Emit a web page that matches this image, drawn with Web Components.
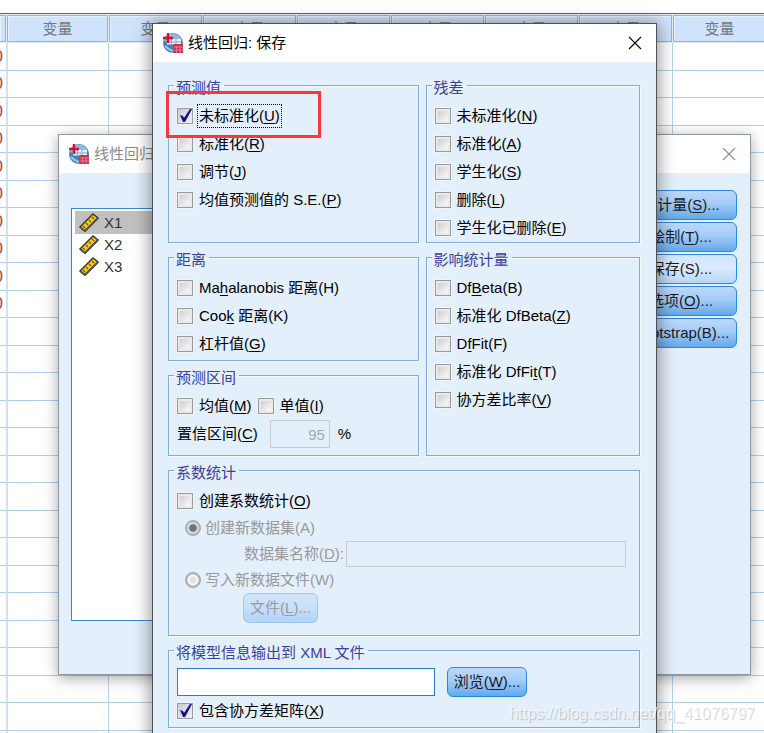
<!DOCTYPE html>
<html lang="zh-CN">
<head>
<meta charset="utf-8">
<title>线性回归: 保存</title>
<style>
  body{margin:0;height:100vh;overflow:hidden;position:relative;background:#fff;color:#000;font:15px/20px "Liberation Sans","Noto Sans CJK SC",sans-serif}
  u{text-underline-offset:2px}
  app-window{position:absolute}
  .back{top:134px;left:58px;right:13px}
  .front{top:23px;left:152px;right:107px;min-height:100vh}
  .regression{display:flex;justify-content:space-between;align-items:flex-start;padding:17px 13px 53px 12px}
  .regression variable-list{flex:0 1 300px;margin-top:18px}
  .buttons{display:flex;flex-direction:column;gap:2px;width:112px}
  .save{display:flex;flex-direction:column;gap:2px;padding:11px 16px 20px 15px}
  .pair{display:grid;grid-template-columns:250fr 214fr;gap:2px 7px}
  .stack{display:flex;flex-direction:column;gap:2px}
  .stack group-box:last-child{flex:1}
  .roomy{--pad-bottom:2px}
  .interval{--pad-bottom:7px}
  .coef{--pad-bottom:12px}
  .row{display:flex;align-items:center;gap:6px}
  .xml{gap:12px}
  .xml text-field{flex:0 1 258px}
  .xml push-button{width:80px}
  .nested{padding-left:8px}
  .name{padding:0 1px 0 67px}
  .file{width:75px;padding-left:66px}
  .watermark{position:absolute;right:9px;bottom:9px;font-size:16px;color:rgb(255 255 255 / .7);text-shadow:1px 1px 1px rgb(0 0 0 / .2)}
</style>
</head>
<body>
  <data-grid columns="8" rows="26" filled="10"></data-grid>

  <app-window class="back" heading="线性回归" inactive>
    <div class="regression">
      <variable-list items="X1,X2,X3" selected="X1"></variable-list>
      <div class="buttons">
        <push-button>统计量(<u>S</u>)...</push-button>
        <push-button>绘制(<u>T</u>)...</push-button>
        <push-button tone="light">保存(S)...</push-button>
        <push-button>选项(<u>O</u>)...</push-button>
        <push-button>Bootstrap(B)...</push-button>
      </div>
    </div>
  </app-window>

  <app-window class="front" heading="线性回归: 保存">
    <div class="save">
      <div class="pair">
        <group-box heading="预测值">
          <check-item checked focused marked>未标准化(<u>U</u>)</check-item>
          <check-item>标准化(<u>R</u>)</check-item>
          <check-item>调节(<u>J</u>)</check-item>
          <check-item>均值预测值的 S.E.(<u>P</u>)</check-item>
        </group-box>
        <group-box heading="残差">
          <check-item>未标准化(<u>N</u>)</check-item>
          <check-item>标准化(<u>A</u>)</check-item>
          <check-item>学生化(<u>S</u>)</check-item>
          <check-item>删除(<u>L</u>)</check-item>
          <check-item>学生化已删除(<u>E</u>)</check-item>
        </group-box>
        <div class="stack">
          <group-box class="roomy" heading="距离">
            <check-item>Ma<u>h</u>alanobis 距离(H)</check-item>
            <check-item>Coo<u>k</u> 距离(K)</check-item>
            <check-item>杠杆值(<u>G</u>)</check-item>
          </group-box>
          <group-box class="interval" heading="预测区间">
            <div class="row">
              <check-item>均值(<u>M</u>)</check-item>
              <check-item>单值(<u>I</u>)</check-item>
            </div>
            <text-field value="95" unit="%" disabled numeric>置信区间(<u>C</u>)</text-field>
          </group-box>
        </div>
        <group-box heading="影响统计量">
          <check-item>Df<u>B</u>eta(B)</check-item>
          <check-item>标准化 DfBeta(<u>Z</u>)</check-item>
          <check-item>D<u>f</u>Fit(F)</check-item>
          <check-item>标准化 DfFi<u>t</u>(T)</check-item>
          <check-item>协方差比率(<u>V</u>)</check-item>
        </group-box>
      </div>
      <group-box class="coef" heading="系数统计">
        <check-item>创建系数统计(<u>O</u>)</check-item>
        <radio-item class="nested" checked>创建新数据集(A)</radio-item>
        <text-field class="name" disabled>数据集名称(<u>D</u>):</text-field>
        <radio-item class="nested">写入新数据文件(W)</radio-item>
        <push-button class="file" disabled>文件(<u>L</u>)...</push-button>
      </group-box>
      <group-box class="roomy" heading="将模型信息输出到 XML 文件">
        <div class="row xml">
          <text-field label="XML 文件"></text-field>
          <push-button>浏览(<u>W</u>)...</push-button>
        </div>
        <check-item checked>包含协方差矩阵(<u>X</u>)</check-item>
      </group-box>
    </div>
  </app-window>

  <div class="watermark">https://blog.csdn.net/qq_41076797</div>

<script>
// Small base: attach an open shadow root and fill it from template()
class UiElement extends HTMLElement{
  constructor(){
    super();
    this.attachShadow({mode:'open'});
  }
  connectedCallback(){ this.shadowRoot.innerHTML = this.template(); }
  flag(name){ return this.hasAttribute(name) ? name : ''; }
  attr(name){ return this.getAttribute(name) || ''; }
}

// <data-grid> — the sheet behind the dialogs
class DataGrid extends UiElement{
  template(){
    const n=Number(this.attr('columns')), rows=Number(this.attr('rows')), filled=Number(this.attr('filled'));
    const head='<th><div></div></th>'+'<th><div>变量</div></th>'.repeat(n);
    let body='';
    for(let i=0;i<rows;i++){
      body+=`<tr><td><span>${i<filled?'0':''}</span></td>${'<td></td>'.repeat(n)}</tr>`;
    }
    return `
      <style>
        :host{display:block;height:100vh;box-sizing:border-box;padding-top:13px;overflow:hidden}
        table{border-collapse:separate;border-spacing:0;table-layout:fixed;width:max-content;border-top:1px solid #1878cc}
        col{width:94px}
        col:first-child{width:6px}
        col:nth-child(2){width:102px}
        th{height:29px;padding:1px 0;font-weight:400;color:#707780;box-sizing:border-box;background:#e3edf8}
        th div{height:27px;line-height:25px;box-sizing:border-box;border:1px solid #9db1ca;margin-left:1px;background:#cfe3fc;box-shadow:inset 1px 1px #e6f1fe}
        th:first-child div{margin-left:0;border-left:0}
        td{height:28px;padding:0;box-sizing:border-box;border-bottom:1px solid #b0cfea;border-left:1px solid #b7d3ec}
        tr:nth-child(even) td{height:27px}
        td:nth-child(2){border-left:2px solid #cfe1f3}
        td:first-child{border-left:0}
        span{display:flex;justify-content:flex-end;width:3px;overflow:hidden;font-size:17px;color:#a8474f}
      </style>
      <table>
        <colgroup>${'<col>'.repeat(n+1)}</colgroup>
        <thead><tr>${head}</tr></thead>
        <tbody>${body}</tbody>
      </table>`;
  }
}
customElements.define('data-grid', DataGrid);

// <app-window> — title bar with logo and close button, content in the slot
class AppWindow extends UiElement{
  template(){
    return `
      <style>
        :host{display:block;box-sizing:border-box;border:1px solid #4c4f54;background:#e3effb;box-shadow:0 2px 16px 2px rgb(0 0 0 / .4)}
        :host([inactive]){border-color:#8d97a3;box-shadow:0 3px 14px rgb(0 0 0 / .35)}
        header{display:flex;align-items:center;gap:5px;height:38px;padding:0 8px 0 10px;background:#fff}
        h2{flex:1;margin:0;font-size:15px;font-weight:400}
        :host([inactive]) :is(h2,button){color:#8c8c8c}
        button{display:flex;padding:6px;border:0;background:none;color:#000}
      </style>
      <header>
        <svg width="20" height="20" viewBox="0 0 20 20" aria-hidden="true">
          <circle cx="10" cy="10" r="10" fill="#4580b5"/>
          <path d="M4 2.500A9.600 9.600 0 0 1 18.500 6L17 11H5L1 7z" fill="#8fb9db"/>
          <path d="M4 6h14v5.500H4z" fill="#e8f2fa"/>
          <path d="M4 9h14M8.500 6v6M13 6v6" stroke="#7ba8cf"/>
          <path d="M2 13q4 4 8 5" stroke="#9cc5e4" stroke-width="2" fill="none"/>
          <path d="M5 0v10M0 5h10" stroke="#d5102f" stroke-width="2.400"/>
          <path d="M10.500 11H20v9h-9.500z" fill="#cf2f4c"/>
          <path d="M11 14h9M11 17h9M13.700 13v7M17 13v7" stroke="#eb98a5" stroke-width=".7"/>
        </svg>
        <h2>${this.attr('heading')}</h2>
        <button aria-label="关闭">
          <svg width="14" height="14" viewBox="0 0 14 14" fill="none" stroke="currentColor" stroke-width="1.1"><path d="M1 1l12 12M13 1L1 13"/></svg>
        </button>
      </header>
      <slot></slot>`;
  }
}
customElements.define('app-window', AppWindow);

// <variable-list> — scale variables with a ruler icon
class VariableList extends UiElement{
  template(){
    const items=this.attr('items').split(',').map(name => `
      <li role="option" aria-selected="${name===this.attr('selected')}">
        <svg width="20" height="20" viewBox="0 0 20 20" aria-hidden="true">
          <path d="M1 14L14 1l5 4L6 18z" fill="#f4c81c" stroke="#3f3a20" stroke-width="1.500"/>
          <path d="M4 13l2 2M7 10l2 2M10 7l2 2M13 4l2 2" stroke="#6b5a12" stroke-width="1.200"/>
          <path d="M2 15l4 3L19 5" stroke="#55524a" stroke-width="2" fill="none"/>
        </svg>${name}
      </li>`).join('');
    return `
      <style>
        :host{display:block}
        ul{margin:0;padding:2px 3px;list-style:none;height:407px;border:1px solid #3b87cc;background:#fff}
        li{display:flex;align-items:center;gap:5px;height:22px;padding-left:4px;color:#333}
        li[aria-selected=true]{height:23px;background:#c0c0c0}
      </style>
      <ul role="listbox" aria-label="变量">${items}</ul>`;
  }
}
customElements.define('variable-list', VariableList);

// <group-box> — titled frame
class GroupBox extends UiElement{
  template(){
    return `
      <style>
        :host{display:flex}
        fieldset{flex:1;min-width:0;margin:0;padding:4px 12px var(--pad-bottom,0) 8px;border:1px solid #7fadda;box-shadow:1px 1px #f6fafe,inset 1px 1px #f2f8fe}
        legend{margin-left:-3px;padding:5px 3px 0 2px;color:#3c3f9c}
      </style>
      <fieldset>
        <legend>${this.attr('heading')}</legend>
        <slot></slot>
      </fieldset>`;
  }
}
customElements.define('group-box', GroupBox);

// <check-item> — tick box with its label; "marked" draws the red frame over it
class CheckItem extends UiElement{
  template(){
    return `
      <style>
        :host{display:block;position:relative}
        :host([marked]){z-index:1}
        label{display:flex;align-items:center;gap:6px;height:28px;white-space:nowrap}
        input{appearance:none;flex:none;width:16px;height:16px;margin:0;border:1px solid #9a9a9a;outline:1px solid #f1f5fa;background:linear-gradient(135deg,#cfcfcf,#fafafa) content-box,#e9e9e9;padding:2px}
        input:checked{background:url("data:image/svg+xml,%3Csvg xmlns='http://www.w3.org/2000/svg' viewBox='0 0 16 16'%3E%3Cpath d='M3 7l3 1 1 2 6-9h2L8 14H6z' fill='%23120d8c'/%3E%3C/svg%3E") center/16px no-repeat,linear-gradient(135deg,#c9c9cf,#f4f4f8)}
        :host([focused]) span{outline:1px dotted #000;outline-offset:1px}
        i{position:absolute;left:-11px;top:-11px;width:149px;height:41px;border:3px solid #fb3838}
      </style>
      <label><input type="checkbox" ${this.flag('checked')}><span><slot></slot></span></label>
      ${this.flag('marked') && '<i></i>'}`;
  }
}
customElements.define('check-item', CheckItem);

// <radio-item>
class RadioItem extends UiElement{
  template(){
    return `
      <style>
        :host{display:block}
        label{display:flex;align-items:center;gap:4px;height:26px;color:#999}
        input{appearance:none;flex:none;width:16px;height:16px;margin:0;border:1px solid #a5a5a5;border-radius:50%;background:radial-gradient(circle,#e0e4e8 0 3px,#f7f7f7 4px 5px,#b5b8bc 6px)}
        input:checked{background:radial-gradient(circle,#6f757c 0 3px,#a9aeb4 4px,#f2f4f6 5px,#b5b8bc 6px)}
      </style>
      <label><input type="radio" disabled ${this.flag('checked')}><span><slot></slot></span></label>`;
  }
}
customElements.define('radio-item', RadioItem);

// <text-field> — label, input and an optional unit
class TextField extends UiElement{
  template(){
    const unit=this.attr('unit'), label=this.attr('label');
    return `
      <style>
        :host{display:block}
        label{display:flex;align-items:center;white-space:nowrap}
        input{flex:1;min-width:0;box-sizing:border-box;height:28px;padding:0 4px;border:1px solid #2a7cc7;background:#fff;font:inherit}
        input:disabled{height:26px;border-color:#cbcbcf;background:transparent;color:#a5a8ac}
        :host([disabled]:not([numeric])) label{gap:2px;color:#999}
        :host([numeric]) label{gap:8px}
        :host([numeric]) input{flex:0 0 60px;height:28px;margin-left:4px;text-align:right}
      </style>
      <label><span><slot></slot></span><input type="text" value="${this.attr('value')}" ${label && `aria-label="${label}"`} ${this.flag('disabled')}>${unit}</label>`;
  }
}
customElements.define('text-field', TextField);

// <push-button> — glossy blue button
class PushButton extends UiElement{
  template(){
    return `
      <style>
        :host{display:block}
        button{display:block;width:100%;height:30px;padding:0;border:1px solid #2489e6;border-radius:6px;background:linear-gradient(#bcd8fc,#a5cbf8 45%,#64a8ec);color:#1a1a1a;font:inherit;white-space:nowrap}
        :host([tone=light]) button{background:linear-gradient(#d3e6fd,#dbeafd 45%,#b5d7f8)}
        button:disabled{border-color:#9cc8f2;background:linear-gradient(#d2e5fc,#c9e0fb 45%,#b0d4f7);color:#9a9a9a}
      </style>
      <button type="button" ${this.flag('disabled')}><slot></slot></button>`;
  }
}
customElements.define('push-button', PushButton);
</script>
</body>
</html>
